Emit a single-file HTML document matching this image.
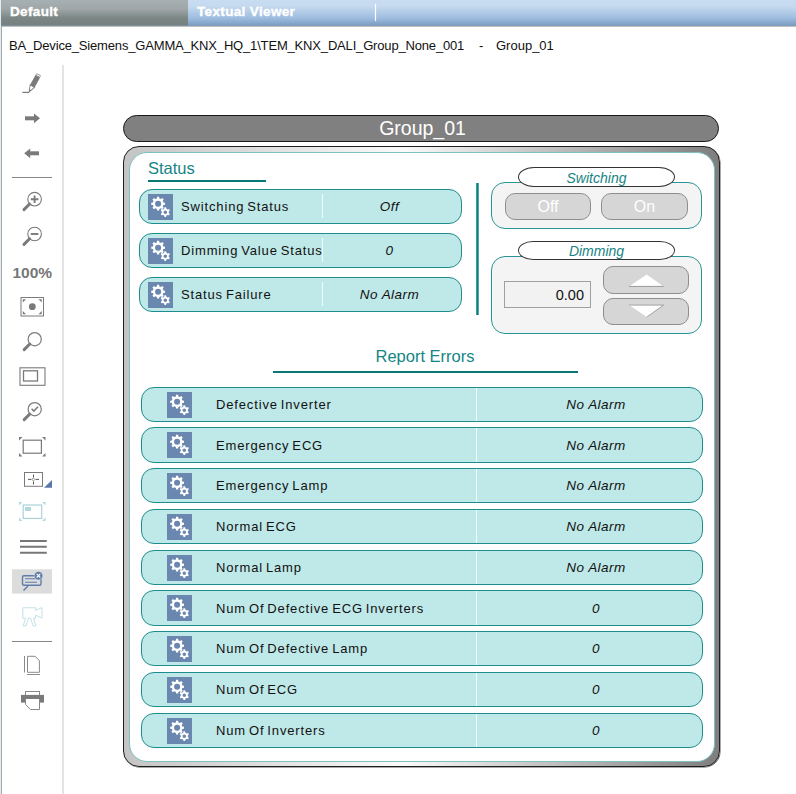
<!DOCTYPE html>
<html><head><meta charset="utf-8">
<style>
*{margin:0;padding:0;box-sizing:border-box}
html,body{width:796px;height:794px;overflow:hidden;background:#fff;font-family:"Liberation Sans",sans-serif;position:relative}
.abs{position:absolute}
#hdr{left:0;top:0;width:796px;height:27px;background:linear-gradient(#c9ddf2 0px,#c6daef 6px,#9ebde0 18px,#7d9ec3 25px);border-bottom:1px solid #c2beb9}
#tab1{left:0;top:0;width:188px;height:26px;border-bottom:1px solid #7890a0;background:linear-gradient(#a6b0b3 0px,#a0a6a7 9px,#7b8785 18px,#76817e 25px)}
#tab1 span,#tab2 span{position:absolute;top:3.5px;color:#fff;font-weight:bold;font-size:13.5px;letter-spacing:0.35px;-webkit-text-stroke:0.35px #fff}
#sep{left:375px;top:4px;width:1px;height:17px;background:#fff;box-shadow:0 0 1px #fff}
#path{left:9px;top:38px;font-size:13px;color:#111;white-space:pre}
#leftline{left:1px;top:26px;width:1px;height:768px;background:#a8a8a8}
#leftline0{left:0;top:0;width:1px;height:794px;background:#dfecf6}
#tbline{left:62px;top:65px;width:2px;height:729px;background:#e4e4e4}
.tsep{left:12px;width:40px;height:1px;background:#8a8a8a}

#title{left:123px;top:115px;width:596px;height:27px;background:#808080;border:1px solid #1a1a1a;border-radius:14px;color:#fff;font-size:19.5px;text-align:center;line-height:24.5px;padding-left:3px}
#frame{left:123px;top:146px;width:597px;height:621px;border:1px solid #1e1e1e;border-radius:16px;box-shadow:0.5px 0.5px 0 #555;background:linear-gradient(90deg,#c4c4c4 0%,#fafafa 47%,#7e7e7e 100%)}
#inner{left:5px;top:5px;right:4px;bottom:4px;background:#fff;border:1px solid #7cc0c0;border-radius:18px}

.h2{color:#158585;font-size:16px}
.uline{height:3px;background:#0a7777}
.srow{left:139px;width:323px;height:35px;background:#bfe8e8;border:1px solid #1f8d8d;border-radius:13px}
.ico{width:25px;height:26px;background:#6d86ab}
.lbl{font-size:13px;color:#111;white-space:nowrap;letter-spacing:0.85px;word-spacing:-1.5px}
.val{font-size:13.5px;color:#111;font-style:italic;text-align:center;white-space:nowrap;letter-spacing:0.45px}
.vdiv{width:1px;background:#f4fdfd}
.rrow{left:141px;width:562px;height:35px;background:#bfe8e8;border:1px solid #1f8d8d;border-radius:13px}
.grp{background:#f4f4f4;border:1px solid #2a9494;border-radius:14px}
.pill{background:#fff;border:1px solid #333;border-radius:16px/10px;text-align:center}
.pill span{font-style:italic;color:#168484;font-size:14px;line-height:20px;display:block}
.btn{background:#d6d6d6;border:1px solid #8e8e8e;border-radius:10px;color:#fff;font-size:16px;text-align:center;line-height:25px}
.inp{background:#f2f2f2;border:1px solid #a0a0a0;color:#111;font-size:14.5px;text-align:right;padding-right:6px;line-height:27px}
</style></head><body>
<div id="hdr" class="abs"></div>
<div id="tab1" class="abs"><span style="left:10px">Default</span></div>
<div id="tab2" class="abs" style="left:188px;top:0;width:200px;height:25px"><span style="left:9px">Textual Viewer</span></div>
<div id="sep" class="abs"></div>
<div id="path" class="abs" style="letter-spacing:-0.17px">BA_Device_Siemens_GAMMA_KNX_HQ_1\TEM_KNX_DALI_Group_None_001</div><div class="abs" style="left:479px;top:38px;font-size:13px;color:#111">-</div><div class="abs" style="left:496px;top:38px;font-size:13px;color:#111">Group_01</div>
<div id="leftline" class="abs"></div><div id="leftline0" class="abs"></div>
<div id="tbline" class="abs"></div>

<svg class="abs" style="left:0;top:0" width="62" height="794" viewBox="0 0 62 794">
<g fill="none" stroke="#7a7a7a">
<!-- pencil -->
<path d="M22.3 92.4 H29" stroke-width="1.2"/>
<g transform="translate(29.2 91.8) rotate(29)">
<path d="M0 0 L-2.5 -6.5 H2.5 Z" fill="#fff" stroke="#7a7a7a" stroke-width="0.9"/>
<path d="M0 0 L-0.9 -2.4 H0.9 Z" fill="#7a7a7a" stroke="none"/>
<rect x="-2.6" y="-17.8" width="5.2" height="11.3" fill="#7a7a7a" stroke="none"/>
<rect x="-2.3" y="-19.6" width="4.6" height="1.8" rx="0.6" fill="#fff" stroke="#8a8a8a" stroke-width="0.8"/>
</g>
<!-- right arrow -->
<path d="M25 118.3 H35" stroke-width="4"/>
<path d="M34 113.5 L40 118.3 L34 123.2 Z" fill="#7a7a7a" stroke="none"/>
<!-- left arrow -->
<path d="M29 153.3 H39" stroke-width="4"/>
<path d="M30.2 148.6 L24.2 153.3 L30.2 158.2 Z" fill="#7a7a7a" stroke="none"/>
<!-- sep -->
<path d="M12 177.5 H52" stroke="#888" stroke-width="1"/>
<!-- zoom + -->
<circle cx="34.6" cy="199.2" r="6.8" stroke-width="1.1"/>
<path d="M24 209.6 L29.6 204" stroke-width="3" stroke-linecap="round"/>
<path d="M30.8 199.2 H38.4 M34.6 195.4 V203" stroke-width="1.9"/>
<!-- zoom - -->
<circle cx="34.6" cy="234" r="6.8" stroke-width="1.1"/>
<path d="M24 244.4 L29.6 238.8" stroke-width="3" stroke-linecap="round"/>
<path d="M30.8 234 H38.4" stroke-width="1.9"/>
<!-- fit -->
<rect x="21" y="297.5" width="22.5" height="18.5" stroke-width="1"/>
<circle cx="32.3" cy="306.7" r="3.4" fill="#7a7a7a" stroke="none"/>
<path d="M22.8 299.3 h3.2 l-3.2 3.2z M41.7 299.3 h-3.2 l3.2 3.2z M22.8 314.2 h3.2 l-3.2 -3.2z M41.7 314.2 h-3.2 l3.2 -3.2z" fill="#7a7a7a" stroke="none"/>
<!-- magnifier -->
<circle cx="34.7" cy="339.2" r="6.6" stroke-width="1.2"/>
<path d="M24.2 349.6 L29.8 344" stroke-width="3" stroke-linecap="round"/>
<!-- rect -->
<rect x="20" y="367.8" width="25" height="17.5" stroke-width="1.1"/>
<rect x="23.5" y="370.8" width="14" height="10.2" stroke-width="1.3"/>
<!-- zoom check -->
<circle cx="34.7" cy="409.2" r="6.6" stroke-width="1.2"/>
<path d="M24.2 419.6 L29.8 414" stroke-width="3" stroke-linecap="round"/>
<path d="M31.6 408.8 L33.8 411 L38 406.8" stroke-width="1.6"/>
<!-- bracket rect -->
<rect x="23.2" y="440.2" width="18.2" height="13" stroke-width="1.2"/>
<path d="M19 437 h3.5 l-3.5 3.5z M45.5 437 h-3.5 l3.5 3.5z M19 456.5 h3.5 l-3.5 -3.5z M45.5 456.5 h-3.5 l3.5 -3.5z" fill="#7a7a7a" stroke="none"/>
<!-- grid -->
<rect x="24.5" y="472.5" width="18" height="13.8" stroke-width="1"/>
<path d="M28 479.4 H31.5 M35.5 479.4 H39 M33.5 474.5 V477.5 M33.5 481.5 V484.5" stroke="#555" stroke-width="1"/><rect x="32.6" y="478.5" width="1.8" height="1.8" fill="none" stroke="#999" stroke-width="0.6"/>
<path d="M44 487.8 L52 480 V487.8 Z" fill="#5a78a8" stroke="none"/>
<!-- card -->
<g stroke="#a9d2da">
<rect x="23.2" y="505" width="18.5" height="13.4" stroke-width="1.2"/>
<rect x="25" y="507" width="6" height="4" fill="#b4d8e0" stroke="none"/>
<path d="M19 502 h3.5 l-3.5 3.5z M45.5 502 h-3.5 l3.5 3.5z M19 521 h3.5 l-3.5 -3.5z M45.5 521 h-3.5 l3.5 -3.5z" fill="#b4d8e0" stroke="none"/>
</g>
<!-- lines -->
<path d="M20 541 H46.8 M20 546.8 H46.8 M20 552.7 H46.8" stroke="#777" stroke-width="1.9"/>
<!-- highlight -->
<rect x="12" y="569.3" width="40" height="24.3" fill="#dcdcdc" stroke="none"/>
<g stroke="#5f7cab">
<rect x="22.5" y="575.8" width="18.5" height="9.5" rx="1.5" stroke-width="1.4"/>
<path d="M25 578.8 H36 M25 582.2 H37" stroke-width="1.1"/>
<path d="M28 586 L23.5 590.5" stroke-width="1.4"/>
<circle cx="38.5" cy="575.7" r="4.3" fill="#5f7cab" stroke="#dcdcdc" stroke-width="0.6"/>
<path d="M36.7 573.9 L40.3 577.5 M40.3 573.9 L36.7 577.5" stroke="#fff" stroke-width="1.1"/>
</g>
<!-- camera -->
<g stroke="#bcdde5" stroke-width="0.9" fill="none" stroke-linejoin="miter">
<path d="M35.6 610.3 V607.8 H22.8 V618.2 H25.6 L23.2 625.8 H26.1 L28.5 618.2 H30.6 L33.1 625.8 H35.9 L33.5 618.2 H35.6 V615.3 L42 618 V607.6 Z"/>
</g>
<!-- sep2 -->
<path d="M12 641.5 H52" stroke="#888" stroke-width="1"/>
<!-- page -->
<path d="M27.5 656.3 H35 L39.4 660.5 V672.3 H27.5 Z" stroke="#8a8a8a" stroke-width="1"/>
<path d="M24.5 656 V672.5 M27 674.5 H40" stroke="#8a8a8a" stroke-width="1"/>
<!-- printer -->
<rect x="25.5" y="691.5" width="14" height="4" stroke="#888" stroke-width="1"/>
<rect x="21" y="694.9" width="23" height="7.7" fill="#7a7a7a" stroke="none"/>
<path d="M25.5 699 V704.5 L30.5 709.5 H39.5 V699" fill="#fff" stroke="#888" stroke-width="1"/>
</g>
</svg>
<div class="abs" style="left:12.5px;top:263.5px;font-size:15.5px;font-weight:bold;color:#777">100%</div>

<div id="title" class="abs">Group_01</div>
<div id="frame" class="abs"><div id="inner" class="abs"></div></div>

<svg width="0" height="0" style="position:absolute"><defs><symbol id="g" viewBox="0 0 25 26"><rect width="25" height="26" fill="#6a87b0"/><path d="M8.84 4.45 L9.06 2.78 L11.14 2.78 L11.36 4.45 L12.92 5.10 L14.26 4.07 L15.73 5.54 L14.70 6.88 L15.35 8.44 L17.02 8.66 L17.02 10.74 L15.35 10.96 L14.70 12.52 L15.73 13.86 L14.26 15.33 L12.92 14.30 L11.36 14.95 L11.14 16.62 L9.06 16.62 L8.84 14.95 L7.28 14.30 L5.94 15.33 L4.47 13.86 L5.50 12.52 L4.85 10.96 L3.18 10.74 L3.18 8.66 L4.85 8.44 L5.50 6.88 L4.47 5.54 L5.94 4.07 L7.28 5.10Z M13.15 9.70 A3.05 3.05 0 1 0 7.05 9.70 A3.05 3.05 0 1 0 13.15 9.70Z M16.15 14.79 L16.53 13.36 L18.07 13.36 L18.45 14.79 L19.68 15.50 L21.11 15.12 L21.87 16.44 L20.83 17.49 L20.83 18.91 L21.87 19.96 L21.11 21.28 L19.68 20.90 L18.45 21.61 L18.07 23.04 L16.53 23.04 L16.15 21.61 L14.92 20.90 L13.49 21.28 L12.73 19.96 L13.77 18.91 L13.77 17.49 L12.73 16.44 L13.49 15.12 L14.92 15.50Z M19.10 18.20 A1.8 1.8 0 1 0 15.50 18.20 A1.8 1.8 0 1 0 19.10 18.20Z" fill="#fff" fill-rule="evenodd"/></symbol></defs></svg>
<div class="abs h2" style="left:148px;top:159px;font-size:16.5px">Status</div>
<div class="abs uline" style="left:148px;top:179.5px;width:118px;height:2.5px"></div>
<div class="abs" style="left:476px;top:183px;width:3px;height:132px;background:linear-gradient(90deg,#3f9c9c 0,#3f9c9c 33.3%,#077f7f 33.3%,#077f7f 66.6%,#52a8a8 66.6%)"></div>
<div class="abs srow" style="top:189px"></div>
<svg class="abs" style="left:148px;top:194px" width="25" height="26"><use href="#g"/></svg>
<div class="abs lbl" style="left:181px;top:199px">Switching Status</div>
<div class="abs vdiv" style="left:322px;top:194px;height:24px"></div>
<div class="abs val" style="left:322px;width:135px;top:199px">Off</div>
<div class="abs srow" style="top:233px"></div>
<svg class="abs" style="left:148px;top:238px" width="25" height="26"><use href="#g"/></svg>
<div class="abs lbl" style="left:181px;top:243px">Dimming Value Status</div>
<div class="abs vdiv" style="left:322px;top:238px;height:24px"></div>
<div class="abs val" style="left:322px;width:135px;top:243px">0</div>
<div class="abs srow" style="top:277px"></div>
<svg class="abs" style="left:148px;top:282px" width="25" height="26"><use href="#g"/></svg>
<div class="abs lbl" style="left:181px;top:287px">Status Failure</div>
<div class="abs vdiv" style="left:322px;top:282px;height:24px"></div>
<div class="abs val" style="left:322px;width:135px;top:287px">No Alarm</div>
<div class="abs h2" style="left:273px;width:304px;text-align:center;top:347px;font-size:16.5px">Report Errors</div>
<div class="abs uline" style="left:273px;top:371px;width:305px;height:2px"></div>
<div class="abs rrow" style="top:387px;height:35px"><div class="abs vdiv" style="left:334px;top:0;height:33px"></div></div>
<svg class="abs" style="left:167px;top:392px" width="25" height="26"><use href="#g"/></svg>
<div class="abs lbl" style="left:216px;top:397px">Defective Inverter</div>
<div class="abs val" style="left:496px;width:200px;top:397px">No Alarm</div>
<div class="abs rrow" style="top:427px;height:36px"><div class="abs vdiv" style="left:334px;top:0;height:34px"></div></div>
<svg class="abs" style="left:167px;top:432px" width="25" height="26"><use href="#g"/></svg>
<div class="abs lbl" style="left:216px;top:438px">Emergency ECG</div>
<div class="abs val" style="left:496px;width:200px;top:438px">No Alarm</div>
<div class="abs rrow" style="top:468px;height:35px"><div class="abs vdiv" style="left:334px;top:0;height:33px"></div></div>
<svg class="abs" style="left:167px;top:473px" width="25" height="26"><use href="#g"/></svg>
<div class="abs lbl" style="left:216px;top:478px">Emergency Lamp</div>
<div class="abs val" style="left:496px;width:200px;top:478px">No Alarm</div>
<div class="abs rrow" style="top:509px;height:35px"><div class="abs vdiv" style="left:334px;top:0;height:33px"></div></div>
<svg class="abs" style="left:167px;top:514px" width="25" height="26"><use href="#g"/></svg>
<div class="abs lbl" style="left:216px;top:519px">Normal ECG</div>
<div class="abs val" style="left:496px;width:200px;top:519px">No Alarm</div>
<div class="abs rrow" style="top:550px;height:35px"><div class="abs vdiv" style="left:334px;top:0;height:33px"></div></div>
<svg class="abs" style="left:167px;top:555px" width="25" height="26"><use href="#g"/></svg>
<div class="abs lbl" style="left:216px;top:560px">Normal Lamp</div>
<div class="abs val" style="left:496px;width:200px;top:560px">No Alarm</div>
<div class="abs rrow" style="top:590px;height:36px"><div class="abs vdiv" style="left:334px;top:0;height:34px"></div></div>
<svg class="abs" style="left:167px;top:595px" width="25" height="26"><use href="#g"/></svg>
<div class="abs lbl" style="left:216px;top:601px">Num Of Defective ECG Inverters</div>
<div class="abs val" style="left:496px;width:200px;top:601px">0</div>
<div class="abs rrow" style="top:631px;height:35px"><div class="abs vdiv" style="left:334px;top:0;height:33px"></div></div>
<svg class="abs" style="left:167px;top:636px" width="25" height="26"><use href="#g"/></svg>
<div class="abs lbl" style="left:216px;top:641px">Num Of Defective Lamp</div>
<div class="abs val" style="left:496px;width:200px;top:641px">0</div>
<div class="abs rrow" style="top:672px;height:35px"><div class="abs vdiv" style="left:334px;top:0;height:33px"></div></div>
<svg class="abs" style="left:167px;top:677px" width="25" height="26"><use href="#g"/></svg>
<div class="abs lbl" style="left:216px;top:682px">Num Of ECG</div>
<div class="abs val" style="left:496px;width:200px;top:682px">0</div>
<div class="abs rrow" style="top:713px;height:35px"><div class="abs vdiv" style="left:334px;top:0;height:33px"></div></div>
<svg class="abs" style="left:167px;top:718px" width="25" height="26"><use href="#g"/></svg>
<div class="abs lbl" style="left:216px;top:723px">Num Of Inverters</div>
<div class="abs val" style="left:496px;width:200px;top:723px">0</div>
<div class="abs grp" style="left:491px;top:182px;width:211px;height:47px"></div>
<div class="abs pill" style="left:518px;top:167px;width:157px;height:20px"><span>Switching</span></div>
<div class="abs btn" style="left:505px;top:193px;width:86px;height:27px">Off</div>
<div class="abs btn" style="left:601px;top:193px;width:87px;height:27px">On</div>
<div class="abs grp" style="left:491px;top:256px;width:211px;height:78px"></div>
<div class="abs pill" style="left:518px;top:241px;width:157px;height:19px"><span style="line-height:18px">Dimming</span></div>
<div class="abs inp" style="left:504px;top:281px;width:87px;height:27px">0.00</div>
<div class="abs btn" style="left:603px;top:266px;width:86px;height:28px"></div>
<div class="abs btn" style="left:603px;top:298px;width:86px;height:27px"></div>
<svg class="abs" style="left:620px;top:266px" width="50" height="60"><path d="M9 20.4 L26.7 8.6 L43.6 20.4 Z" fill="#fff"/><path d="M9 20.4 H43.6" stroke="#9a9a9a" stroke-width="1"/><path d="M9 39.1 H43.6 L26.7 51 Z" fill="#fff"/><path d="M9 39.1 H43.6 L26.7 51" stroke="#9a9a9a" stroke-width="0.9" fill="none"/></svg>
</body></html>
